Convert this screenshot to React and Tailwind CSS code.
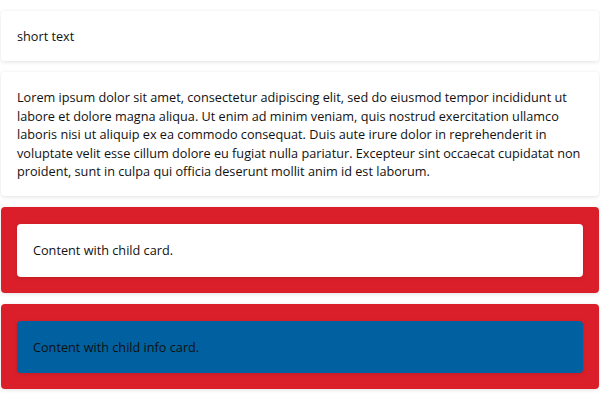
import React from 'react';

const lorem = 'Lorem ipsum dolor sit amet, consectetur adipiscing elit, sed do eiusmod tempor incididunt ut labore et dolore magna aliqua. Ut enim ad minim veniam, quis nostrud exercitation ullamco laboris nisi ut aliquip ex ea commodo consequat. Duis aute irure dolor in reprehenderit in voluptate velit esse cillum dolore eu fugiat nulla pariatur. Excepteur sint occaecat cupidatat non proident, sunt in culpa qui officia deserunt mollit anim id est laborum.';

function Card({ className = 'bg-white p-4', children }) {
  return (
    <div className={`rounded-[4px] shadow-[0_1px_4px_rgba(0,0,0,0.12)] ${className}`}>
      {children}
    </div>
  );
}

export default function App() {
  return (
    <div className="min-h-[400px] bg-white px-px pt-[11px] flex flex-col gap-[11px] text-[12.7px] leading-[18.4px] text-[#111] font-['Open_Sans',sans-serif]">
      <Card>short text</Card>
      <Card>{lorem}</Card>
      <Card className="bg-[#da1f2a] px-4 pt-[17px] pb-4">
        <Card className="bg-white px-4 py-[17px]">Content with child card.</Card>
      </Card>
      <Card className="bg-[#da1f2a] px-4 pt-[17px] pb-4">
        <Card className="bg-[#0060a0] px-4 py-[17px]">Content with child info card.</Card>
      </Card>
    </div>
  );
}
